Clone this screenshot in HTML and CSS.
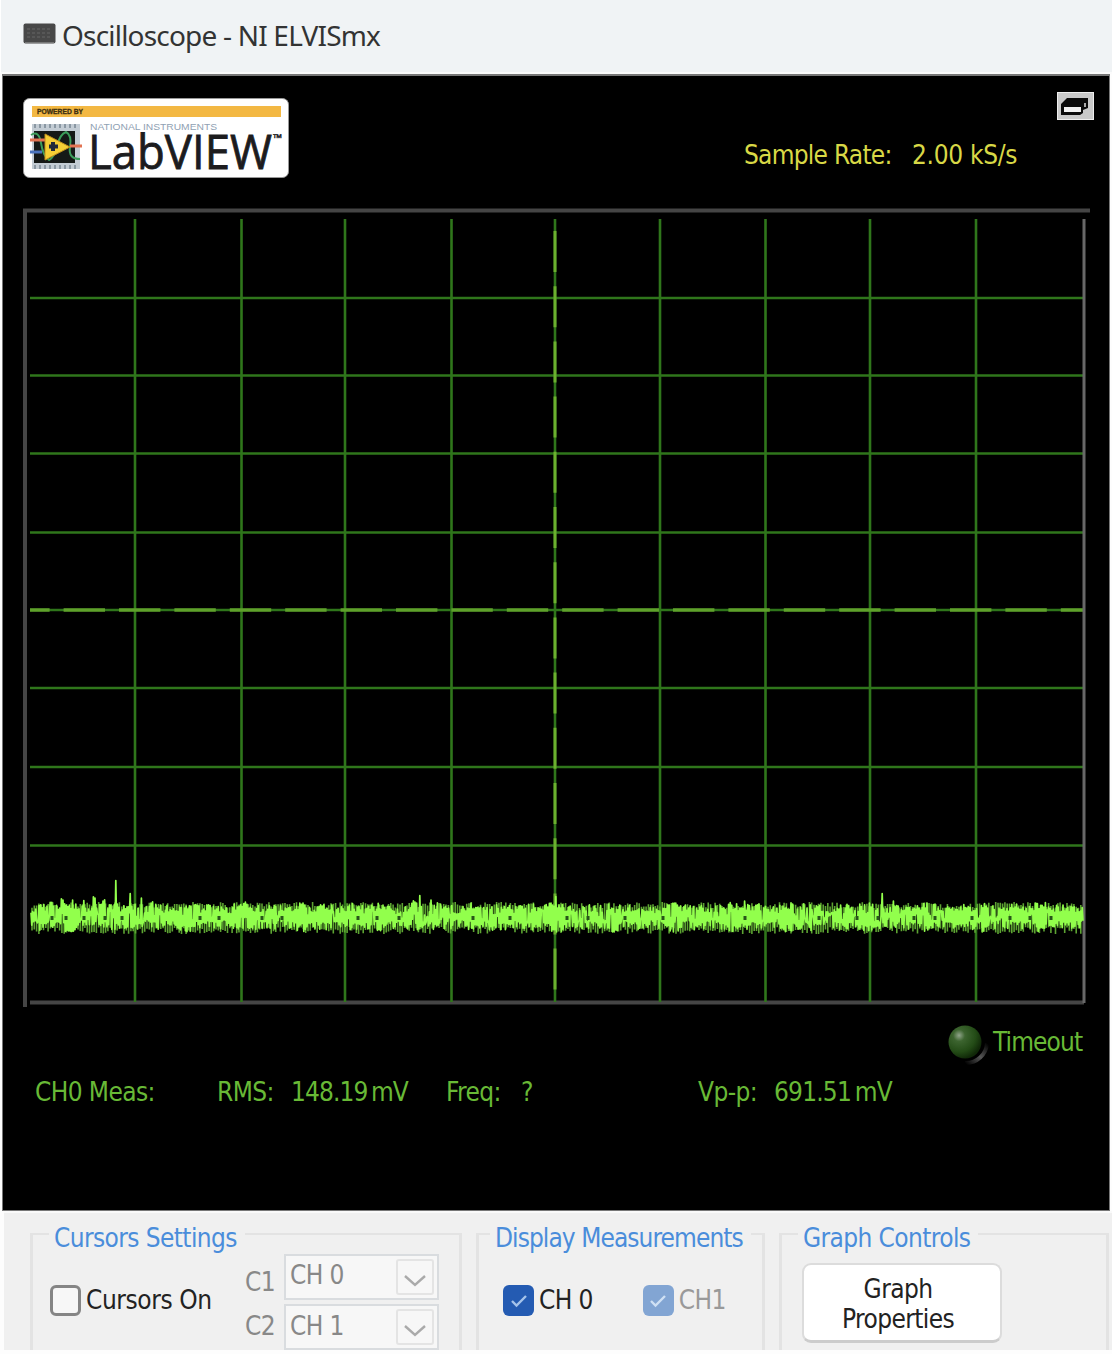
FILE: index.html
```html
<!DOCTYPE html>
<html lang="en">
<head>
<meta charset="utf-8">
<title>Oscilloscope - NI ELVISmx</title>
<link rel="stylesheet" href="styles.css">
</head>
<body>
<header class="titlebar">
  <svg class="app-icon" width="34" height="22" viewBox="0 0 34 22"><rect x="0.500" y="0.500" width="32" height="20" rx="2" fill="#484848"/><path d="M4 6h24M4 10h24M4 14h24" stroke="#5c5c5c" stroke-width="1.5" stroke-dasharray="3 2"/><path d="M2 19.500h29" stroke="#777"/></svg>
  <h1 class="title">Oscilloscope - NI ELVISmx</h1>
</header>
<main class="scope">
  <div class="scope-head">
    <svg class="logo" width="266" height="80" viewBox="0 0 266 80">
      <rect x="0.5" y="0.5" width="265" height="79" rx="6" fill="#fff" stroke="#999"/>
      <rect x="9" y="8" width="249" height="11" fill="#f3b843"/>
      <text x="14" y="15.500" class="logo-powered" textLength="46" lengthAdjust="spacingAndGlyphs">POWERED BY</text>
      <text x="67" y="32" class="logo-ni" textLength="127" lengthAdjust="spacingAndGlyphs">NATIONAL INSTRUMENTS</text>
      <text x="65" y="71" class="logo-name" textLength="184" lengthAdjust="spacingAndGlyphs">LabVIEW</text>
      <text x="250" y="44" class="logo-tm" textLength="9" lengthAdjust="spacingAndGlyphs">™</text>
      <rect x="9" y="26" width="48" height="45" fill="#c3ccd4"/>
      <path d="M11 28h44M11 69h44" stroke="#8b98a3" stroke-width="4" stroke-dasharray="2 3"/>
      <rect x="11" y="33" width="41" height="32" fill="#151917"/>
      <path d="M8 37q8-5 10 8t8 17q5-2 8-14t9-14q6 3 4 15t10 12" fill="none" stroke="#3c9d5b" stroke-width="2"/>
      <path d="M7 42h15M47 48h12" stroke="#e27352" stroke-width="3"/>
      <path d="M7 54h12" stroke="#4a73bd" stroke-width="3"/>
      <path d="M22 36v26l25-13z" fill="#f5cf35" stroke="#c08f1c"/>
      <path d="M30 44v9M26 48.500h9" stroke="#222b3a" stroke-width="4"/>
    </svg>
    <div class="head-right">
      <button class="restore" aria-label="Undock graph"><svg width="37" height="28" viewBox="0 0 37 28"><path d="M4 23V12l6-6h21v10l-5 2v3l-3 2z" fill="#0b0b0b"/><path d="M7 15h17v5H7z" fill="#f2f2f2"/><path d="M27 11h2v4h-2z" fill="#aaa"/></svg></button>
      <p class="rate"><span class="rate-label">Sample Rate:</span><span class="rate-value">2.00 kS/s</span></p>
    </div>
  </div>
  <svg class="graph" width="1068" height="802" viewBox="22 207 1068 802">
    <path class="frame" d="M25 1007V210.500H1090"/>
    <path class="frame" d="M30 1002.500H1084"/>
    <path class="grid" d="M135 219V1002M241.500 219V1002M345 219V1002M451.500 219V1002M660 219V1002M765.500 219V1002M870 219V1002M976 219V1002M30 298H1084M30 375.500H1084M30 453.500H1084M30 532.500H1084M30 688H1084M30 767H1084M30 845.500H1084M555 219V1002M30 610H1084"/>
    <path class="axis axis-y" d="M555 231V1002"/>
    <path class="axis axis-x" d="M30 610H1084"/>
    <path class="frame-right" d="M1084 219V1003"/>
    <path class="fringe" id="fringe"/>
    <path class="trace" id="trace"/>
  </svg>
  <div class="timeout">
    <svg width="44" height="44" viewBox="0 0 44 44"><defs><radialGradient id="led" cx=".32" cy=".3" r=".72"><stop offset="0" stop-color="#91a58b"/><stop offset=".25" stop-color="#3c642f"/><stop offset=".7" stop-color="#234b16"/><stop offset="1" stop-color="#102808"/></radialGradient><linearGradient id="rim" x1="1" y1="0" x2="0" y2="1"><stop offset="0" stop-color="#000"/><stop offset=".5" stop-color="#555"/><stop offset="1" stop-color="#000"/></linearGradient></defs><path d="M40 20A21 21 0 0 1 18 40" fill="none" stroke="url(#rim)" stroke-width="4"/><circle cx="18" cy="19" r="16.500" fill="url(#led)"/></svg>
    <span>Timeout</span>
  </div>
  <div class="meas">
    <span class="m-title">CH0 Meas:</span>
    <span class="m-rms">RMS:</span><span class="m-rms-v">148.19 mV</span>
    <span class="m-freq">Freq:</span><span class="m-freq-v">?</span>
    <span class="m-vpp">Vp-p:</span><span class="m-vpp-v">691.51 mV</span>
  </div>
</main>
<section class="controls">
  <div class="group cursors">
    <h2 class="legend">Cursors Settings</h2>
    <label class="check"><span class="box"></span><span class="cursors-on">Cursors On</span></label>
    <div class="sources">
      <div class="source"><span class="source-name">C1</span><div class="select"><span>CH 0</span><i><svg width="22" height="14" viewBox="0 0 22 14"><path d="M1 2l10 9L21 2"/></svg></i></div></div>
      <div class="source second"><span class="source-name">C2</span><div class="select"><span>CH 1</span><i><svg width="22" height="14" viewBox="0 0 22 14"><path d="M1 2l10 9L21 2"/></svg></i></div></div>
    </div>
  </div>
  <div class="group display">
    <h2 class="legend">Display Measurements</h2>
    <label class="check"><span class="box on"><svg width="18" height="14" viewBox="0 0 18 14"><path d="M2 7l4.500 4.500L16 2"/></svg></span><span class="ch0">CH 0</span></label>
    <label class="check off"><span class="box on"><svg width="18" height="14" viewBox="0 0 18 14"><path d="M2 7l4.500 4.500L16 2"/></svg></span><span class="ch1">CH1</span></label>
  </div>
  <div class="group graph-controls">
    <h2 class="legend">Graph Controls</h2>
    <button class="props"><span class="p1">Graph</span><span class="p2">Properties</span></button>
  </div>
</section>
<script src="trace.js"></script>
</body>
</html>
```
FILE: styles.css
```css
* { box-sizing: border-box; }
body {
  margin: 0;
  width: 1112px;
  height: 1354px;
  overflow: hidden;
  background: #fdfdfd;
  font: 26px/30px "DejaVu Sans Condensed", "DejaVu Sans", sans-serif;
  font-stretch: condensed;
  letter-spacing: -0.6px;
}
h1, h2, p { margin: 0; font-size: inherit; font-weight: normal; }
button { font: inherit; letter-spacing: inherit; padding: 0; }

.titlebar { display: flex; height: 74px; padding: 20px 0 0 22px; gap: 5px; background: #f0f3f5; border-left: 1px solid #fff; border-bottom: 2px solid #fbfbfb; }
.app-icon { margin-top: 3px; }
.title { font: 28px/30px "Noto Sans", sans-serif; letter-spacing: -0.8px; color: #333; white-space: pre; }

.scope { height: 1137px; margin: 0 2px 0 2px; background: #000; border: 1px solid #777; border-top-width: 2px; overflow: hidden; }
.scope-head { display: flex; justify-content: space-between; height: 131px; padding: 22px 15px 0 20px; }
.head-right { display: flex; flex-direction: column; align-items: flex-end; margin-top: -6px; }
.restore { width: 37px; height: 28px; background: #c9c9c9; border: 1px solid #eee; }
.restore svg { display: block; margin: -1px; }
.rate { display: flex; width: 350px; margin-top: 20px; color: #d8d846; white-space: pre; }
.rate-label { width: 168px; letter-spacing: -0.75px; }
.rate-value { letter-spacing: -0.3px; }
.logo { overflow: visible; }
.logo text { letter-spacing: 0; font-stretch: normal; }
.logo-powered { font: bold 6.5px "Liberation Sans", sans-serif; fill: #3e3011; stroke: #3e3011; stroke-width: .3; }
.logo-ni { font: 8.5px "Liberation Sans", sans-serif; fill: #8fa1b3; }
.logo-name { font: 47px "Open Sans", sans-serif; fill: #1c1c1e; stroke: #1c1c1e; stroke-width: .8; }
.logo-tm { font: 11px "Open Sans", sans-serif; fill: #1c1c1e; stroke: #1c1c1e; stroke-width: .4; }

.graph { display: block; margin-left: 19px; }
.graph path { fill: none; }
.frame { stroke: #454545; stroke-width: 4; }
.frame-right { stroke: #686868; stroke-width: 3; }
.grid { stroke: #2f761b; stroke-width: 2.6; }
.axis { stroke: #6bb02e; stroke-width: 3; }
.axis-y { stroke-dasharray: 41 14.2; }
.axis-x { stroke: #5fa12b; stroke-dasharray: 41.4 14; stroke-dashoffset: 21.8; stroke-width: 3.4; }
.graph .trace { stroke: #92ff4c; stroke-width: 1.7; stroke-linejoin: round; }
.graph .fringe { stroke: #5da432; stroke-width: 1.6; }

.timeout { display: flex; justify-content: flex-end; height: 46px; padding: 14px 25px 0 0; gap: 2px; color: #68b936; }
.timeout span { letter-spacing: -0.9px; width: 91px; padding-top: 4px; white-space: nowrap; }
.meas { display: flex; margin: 22px 0 0 32px; color: #68b936; white-space: nowrap; }
.m-title { width: 182px; }
.m-rms { width: 74px; }
.m-rms-v { width: 155px; word-spacing: -3px; letter-spacing: -0.9px; }
.m-freq { width: 75px; }
.m-freq-v { width: 177px; }
.m-vpp { width: 76px; }
.m-vpp-v { word-spacing: -3px; letter-spacing: -0.8px; }

.controls { display: grid; grid-template-columns: 432px 289px 330px; column-gap: 14px; height: 139px; padding: 20px 0 0 26px; margin-left: 4px; background: #f0f0f0; border-top: 2px solid #fafafa; overflow: hidden; }
.group { position: relative; display: flex; border: 3px solid #e3e3e3; border-top-width: 2px; border-bottom: 0; color: #222; white-space: nowrap; }
.legend { position: absolute; top: -12px; left: 16px; padding: 0 8px 0 5px; background: #f0f0f0; color: #4a8ddb; }
.display .legend { left: 11px; letter-spacing: -0.93px; }
.check { display: flex; align-items: flex-start; gap: 5px; height: 31px; }
.box { display: flex; align-items: center; justify-content: center; flex: none; width: 31px; height: 31px; border: 3px solid #858585; border-radius: 6px; background: #f7f7f7; }
.box svg, .select svg { fill: none; stroke: #a5c3ea; stroke-width: 2.4; }
.box.on { background: #245bb2; border: 0; }
.off { color: #999; }
.off .box.on { background: #82a5d3; }
.off .box svg { stroke: #cfe0f4; }
.cursors .check { margin: 50px 0 0 17px; width: 195px; }
.cursors-on { letter-spacing: -0.4px; }
.sources { display: flex; flex-direction: column; margin-top: 19px; color: #888; }
.source { display: flex; height: 50px; gap: 6px; }
.source-name { width: 33px; padding-top: 13px; }
.second .source-name { padding-top: 7px; }
.select { display: flex; justify-content: space-between; width: 155px; height: 46px; border: 2px solid #d9dcdf; background: #f7f7f7; padding: 3px 3px 3px 4px; }
.select span { padding-top: 1px; }
.second .select span { padding-top: 2px; }
.select i { display: flex; align-items: center; justify-content: center; width: 38px; padding-top: 8px; border: 2px solid #e4e4e4; border-radius: 3px; }
.select svg { stroke: #aaa; }
.display .check { margin: 50px 0 0 24px; }
.display .check + .check { margin-left: 50px; }
.ch1 { letter-spacing: -0.6px; }
.graph-controls .legend { left: 16px; }
.props { display: flex; flex-direction: column; align-items: center; width: 200px; height: 80px; margin: 28px 0 0 20px; padding: 9px 8px 0 0; border: 2px solid #dcdcdc; border-bottom: 3px solid #ccc; border-radius: 9px; background: #fff; color: #222; }
```
FILE: trace.js
```javascript
// Noise trace: a dim outer fringe, a bright core band and a few transient peaks.
(function () {
  var seed = 1234567;
  function rnd() {
    seed = (seed * 1103515245 + 12345) % 2147483648;
    return seed / 2147483648;
  }
  var peaks = [[51, 900], [62, 897], [73, 899], [84, 900], [94, 895], [104, 898], [116, 880], [130, 893], [141, 897], [152, 900], [414, 899], [420, 895], [431, 900], [556, 896], [745, 900], [882, 893], [893, 900]];

  var fringe = '';
  for (var f = 32; f < 1083; f += 2.3) {
    fringe += 'M' + f.toFixed(1) + ' ' + (902 + rnd() * 6).toFixed(1) + 'V' + (927 + rnd() * 7).toFixed(1);
  }
  document.getElementById('fringe').setAttribute('d', fringe);

  var d = '';
  var up = true;
  for (var x = 31; x < 1083; x += 0.8) {
    var swell = 2.5 * Math.sin(x / 6.2) * Math.sin(x / 17);
    var y = up ? 912 - swell - rnd() * 8 : 921 + swell + rnd() * 9;
    if (rnd() < 0.14) y = 911 + rnd() * 12;
    for (var i = 0; i < peaks.length; i++) {
      if (up && Math.abs(x - peaks[i][0]) < 1.1) y = peaks[i][1] + Math.abs(x - peaks[i][0]) * 3;
    }
    d += (d ? 'L' : 'M') + x.toFixed(1) + ' ' + y.toFixed(1);
    up = !up;
  }
  // Small gaps where the noise leaves the baseline uncovered.
  document.getElementById('trace').setAttribute('d', d);
  var ns = 'http://www.w3.org/2000/svg';
  var gaps = [52, 66, 84, 105, 122, 200, 219, 262, 282, 358, 377, 399, 473, 510, 567, 588, 625, 663, 745, 819, 857, 878, 914, 935, 972, 1010, 1030, 1051];
  gaps.forEach(function (gx) {
    var r = document.createElementNS(ns, 'rect');
    r.setAttribute('x', gx - 1.5);
    r.setAttribute('y', 916);
    r.setAttribute('width', 3);
    r.setAttribute('height', 4);
    r.setAttribute('fill', '#28551a');
    document.querySelector('.graph').appendChild(r);
  });
})();
```
